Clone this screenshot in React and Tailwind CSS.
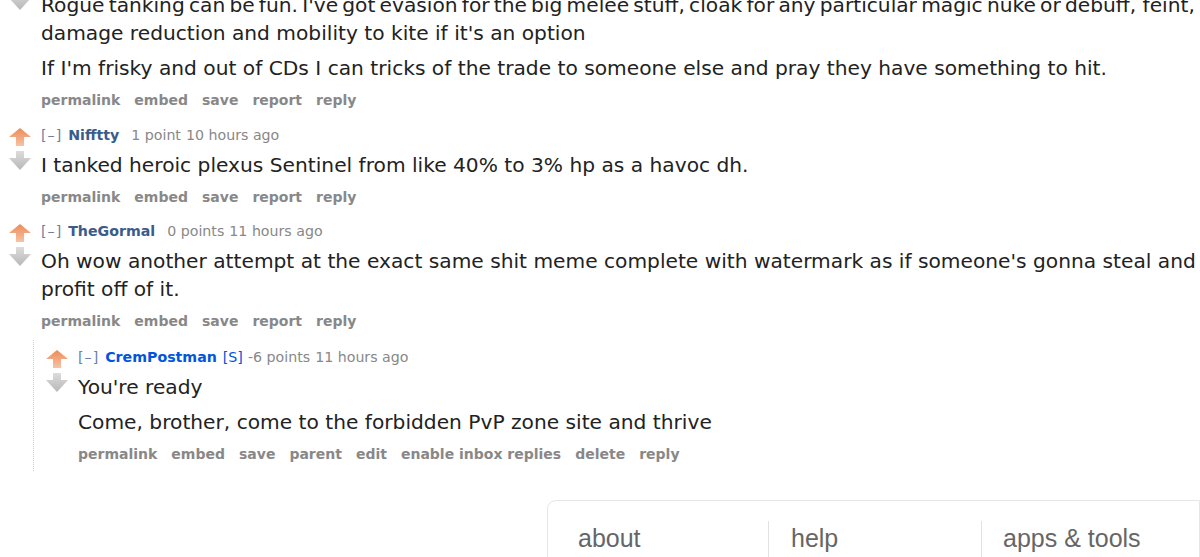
import React from 'react'

const Arrows = () => (
  <div className="flex flex-col items-center w-[22px] shrink-0 pt-[3px]">
    <svg width="22" height="18" viewBox="0 0 22 18">
      <defs>
        <linearGradient id="upg" x1="0" y1="0" x2="0" y2="1">
          <stop offset="0" stopColor="#ee8a55" />
          <stop offset="1" stopColor="#f6c3a6" />
        </linearGradient>
      </defs>
      <path d="M11 0 L22 9 L15 9 L15 18 L7 18 L7 9 L0 9 Z" fill="url(#upg)" />
    </svg>
    <svg width="22" height="19" viewBox="0 0 22 19" className="mt-[5px]">
      <defs>
        <linearGradient id="dng" x1="0" y1="0" x2="0" y2="1">
          <stop offset="0" stopColor="#dcdcdc" />
          <stop offset="1" stopColor="#b8b8b8" />
        </linearGradient>
      </defs>
      <path d="M7 0 L15 0 L15 7 L22 7 L11 19 L0 7 L7 7 Z" fill="url(#dng)" />
    </svg>
  </div>
)

const Comment = ({ author, submitter, score, time, paras, buttons, children, className = '' }) => (
  <div className={className}>
    <div className="flex">
      <div className="pl-[9px] pr-[10px] flex">
        <Arrows />
      </div>
      <div className="flex-1 min-w-0">
        <div className="text-[14.2px] leading-[20px] text-[#888] whitespace-nowrap">
          <span className="text-[#6b80aa] tracking-[1px]">[–]</span>
          <span className={`ml-[6px] font-bold ${submitter ? 'text-[#0055df]' : 'text-[#3a5b8c]'}`}>{author}</span>
          {submitter && <span className="ml-[6px] text-[#0055df]">[S]</span>}
          <span className={submitter ? 'ml-[5px]' : 'ml-[12px]'}>{score}</span>
          <span className="ml-[5px]">{time}</span>
        </div>
        <div className="mt-[6px] text-[20.2px] leading-[28px] text-[#222] space-y-[7px]">
          {paras.map((p, i) => (
            <p key={i}>{p}</p>
          ))}
        </div>
        <div className="mt-[8px] flex gap-[14px] text-[14px] leading-[20px] font-bold text-[#888]">
          {buttons.map((b) => (
            <span key={b}>{b}</span>
          ))}
        </div>
      </div>
    </div>
    {children}
  </div>
)

const basic = ['permalink', 'embed', 'save', 'report', 'reply']

export default function App() {
  return (
    <div className="w-[1200px] h-[557px] overflow-hidden bg-white" style={{ fontFamily: '"DejaVu Sans", Verdana, sans-serif' }}>
      <div className="w-[1235px] mt-[-35px]">
        <Comment
          className="mb-[15px]"
          author="Rogueish"
          score="3 points"
          time="11 hours ago"
          paras={[
            <>
              <span className="[word-spacing:-2.2px]">
                Rogue tanking can be fun. I've got evasion for the big melee stuff, cloak for any particular magic nuke or debuff,
              </span>{' '}
              feint, damage reduction and mobility to kite if it's an option
            </>,
            "If I'm frisky and out of CDs I can tricks of the trade to someone else and pray they have something to hit.",
          ]}
          buttons={basic}
        />
        <Comment
          className="mb-[14px]"
          author="Nifftty"
          score="1 point"
          time="10 hours ago"
          paras={['I tanked heroic plexus Sentinel from like 40% to 3% hp as a havoc dh.']}
          buttons={basic}
        />
        <Comment
          author="TheGormal"
          score="0 points"
          time="11 hours ago"
          paras={["Oh wow another attempt at the exact same shit meme complete with watermark as if someone's gonna steal and profit off of it."]}
          buttons={basic}
        >
          <div className="ml-[33px] mt-[9px] pt-[7px] pb-[7px] border-l border-dotted border-[#ccc]">
            <div className="pl-[3px]">
              <Comment
                author="CremPostman"
                submitter
                score="-6 points"
                time="11 hours ago"
                paras={["You're ready", 'Come, brother, come to the forbidden PvP zone site and thrive']}
                buttons={['permalink', 'embed', 'save', 'parent', 'edit', 'enable inbox replies', 'delete', 'reply']}
              />
            </div>
          </div>
        </Comment>
      </div>
      <div className="flex justify-end mt-[29px]">
        <div
          className="w-[653px] h-[80px] border border-[#e6e6e6] rounded-tl-[9px] pl-[8px] pt-[20px] flex text-[25px] leading-[34px] text-[#666]"
          style={{ fontFamily: '"Liberation Sans", Arial, sans-serif' }}
        >
          <div className="w-[212px] px-[22px]">about</div>
          <div className="w-[213px] px-[22px] border-l border-[#e2e2e2]">help</div>
          <div className="flex-1 px-[21px] border-l border-[#e2e2e2]">apps &amp; tools</div>
        </div>
      </div>
    </div>
  )
}
